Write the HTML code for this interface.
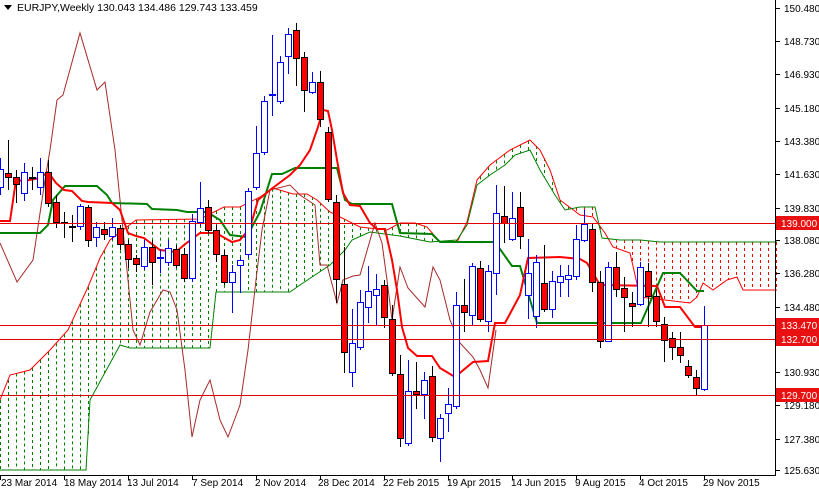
<!DOCTYPE html>
<html><head><meta charset="utf-8"><style>
html,body{margin:0;padding:0;background:#fff;width:819px;height:491px;overflow:hidden}
svg{display:block;font-family:"Liberation Sans",sans-serif;font-size:10px}
</style></head><body>
<svg id="c" width="819" height="491" viewBox="0 0 819 491" xmlns="http://www.w3.org/2000/svg">
<rect width="819" height="491" fill="#fff"/>
<g id="hatch"></g>
<g id="lines"></g>
<g id="candles"></g>
<g stroke="#e00000" stroke-width="1">
<line x1="0" y1="223.5" x2="776" y2="223.5"/>
<line x1="0" y1="325.5" x2="776" y2="325.5"/>
<line x1="0" y1="339.5" x2="776" y2="339.5"/>
<line x1="0" y1="395.5" x2="776" y2="395.5"/>
</g>
<line x1="775.5" y1="0" x2="775.5" y2="476" stroke="#000"/>
<line x1="0" y1="475.5" x2="776" y2="475.5" stroke="#000"/>
<g fill="#000">
<text x="784" y="12">150.480</text>
<text x="784" y="45">148.730</text>
<text x="784" y="78">146.930</text>
<text x="784" y="112">145.180</text>
<text x="784" y="145">143.380</text>
<text x="784" y="178">141.630</text>
<text x="784" y="212">139.830</text>
<text x="784" y="244">138.080</text>
<text x="784" y="277">136.280</text>
<text x="784" y="311">134.480</text>
<text x="784" y="376">130.930</text>
<text x="784" y="409">129.180</text>
<text x="784" y="443">127.380</text>
<text x="784" y="474">125.630</text>
</g>
<g stroke="#000">
<line x1="776" y1="8.5" x2="780" y2="8.5"/><line x1="776" y1="41.5" x2="780" y2="41.5"/><line x1="776" y1="74.5" x2="780" y2="74.5"/><line x1="776" y1="108.5" x2="780" y2="108.5"/><line x1="776" y1="141.5" x2="780" y2="141.5"/><line x1="776" y1="174.5" x2="780" y2="174.5"/><line x1="776" y1="208.5" x2="780" y2="208.5"/><line x1="776" y1="240.5" x2="780" y2="240.5"/><line x1="776" y1="273.5" x2="780" y2="273.5"/><line x1="776" y1="307.5" x2="780" y2="307.5"/><line x1="776" y1="372.5" x2="780" y2="372.5"/><line x1="776" y1="405.5" x2="780" y2="405.5"/><line x1="776" y1="439.5" x2="780" y2="439.5"/><line x1="776" y1="470.5" x2="780" y2="470.5"/>
</g>
<g>
<rect x="776" y="216" width="43" height="14" fill="#e81010"/><text x="781" y="227" fill="#fff">139.000</text>
<rect x="776" y="318" width="43" height="14" fill="#e81010"/><text x="781" y="329" fill="#fff">133.470</text>
<rect x="776" y="332" width="43" height="14" fill="#e81010"/><text x="781" y="343" fill="#fff">132.700</text>
<rect x="776" y="388" width="43" height="14" fill="#e81010"/><text x="781" y="399" fill="#fff">129.700</text>
</g>
<g fill="#000">
<text x="1" y="486">23 Mar 2014</text>
<text x="64" y="486">18 May 2014</text>
<text x="127" y="486">13 Jul 2014</text>
<text x="192" y="486">7 Sep 2014</text>
<text x="255" y="486">2 Nov 2014</text>
<text x="318" y="486">28 Dec 2014</text>
<text x="383" y="486">22 Feb 2015</text>
<text x="447" y="486">19 Apr 2015</text>
<text x="511" y="486">14 Jun 2015</text>
<text x="575" y="486">9 Aug 2015</text>
<text x="639" y="486">4 Oct 2015</text>
<text x="703" y="486">29 Nov 2015</text>
</g>
<g stroke="#000"><line x1="0.5" y1="476" x2="0.5" y2="480"/><line x1="64.5" y1="476" x2="64.5" y2="480"/><line x1="128.5" y1="476" x2="128.5" y2="480"/><line x1="192.5" y1="476" x2="192.5" y2="480"/><line x1="256.5" y1="476" x2="256.5" y2="480"/><line x1="320.5" y1="476" x2="320.5" y2="480"/><line x1="384.5" y1="476" x2="384.5" y2="480"/><line x1="448.5" y1="476" x2="448.5" y2="480"/><line x1="512.5" y1="476" x2="512.5" y2="480"/><line x1="576.5" y1="476" x2="576.5" y2="480"/><line x1="640.5" y1="476" x2="640.5" y2="480"/><line x1="704.5" y1="476" x2="704.5" y2="480"/></g>
<polygon points="4,5 12,5 8,10" fill="#000"/>
<text x="17" y="11" fill="#000" font-size="10.5">EURJPY,Weekly  130.043 134.486 129.743 133.459</text>
</svg>
<script>
var NS="http://www.w3.org/2000/svg";
function el(p,t,a){var e=document.createElementNS(NS,t);for(var k in a)e.setAttribute(k,a[k]);p.appendChild(e);return e;}
function interp(pts,x){for(var i=0;i<pts.length-1;i++){if(x>=pts[i][0]&&x<=pts[i+1][0]){var t=(x-pts[i][0])/((pts[i+1][0]-pts[i][0])||1);return pts[i][1]+t*(pts[i+1][1]-pts[i][1]);}}return pts[pts.length-1][1];}
var A=[[0,400],[10,375],[30,370],[50,350],[68,330],[88,287],[100,258],[110,240],[136,220],[200,219],[224,207],[240,207],[260,197],[273,188],[293,194],[307,194],[317,200],[330,212],[360,227],[387,230],[400,223],[415,223],[427,227],[440,242],[457,242],[467,222],[477,180],[490,165],[510,150],[530,140],[540,150],[550,170],[560,200],[580,215],[593,217],[605,233],[613,247],[630,253],[640,297],[690,303],[697,297],[703,283],[713,290],[727,280],[737,277],[743,290],[777,290]];
var B=[[0,470],[86,470],[90,400],[120,345],[130,348],[210,348],[216,292],[290,292],[300,285],[330,265],[345,250],[352,240],[370,232],[400,236],[430,242],[457,240],[467,225],[477,185],[490,175],[505,165],[515,155],[530,150],[540,170],[555,195],[565,210],[580,207],[595,207],[602,238],[620,240],[640,240],[660,242],[777,242]];
var h=document.getElementById("hatch"),L=document.getElementById("lines");
for(var x=0;x<=776;x+=8){var a=interp(A,x),b=interp(B,x);var g=a<b;el(h,"line",{x1:x+.5,y1:Math.min(a,b),x2:x+.5,y2:Math.max(a,b),stroke:g?"#008000":"#ff0000","stroke-dasharray":"3,3","stroke-width":1});}
function pl(pts,c,w){el(L,"polyline",{points:pts.map(function(p){return p.join(",")}).join(" "),fill:"none",stroke:c,"stroke-width":w});}
pl(A,"#ff0000",1);pl(B,"#008000",1);
pl([[0,243],[17,282],[33,260],[45,180],[50,150],[57,100],[63,95],[80,33],[97,90],[105,82],[115,150],[125,250],[133,330],[140,345],[150,312],[163,290],[170,292],[177,310],[185,370],[192,437],[200,400],[210,380],[220,420],[228,437],[240,405],[248,350],[256,280],[262,230],[270,190],[290,185],[300,195],[315,205],[320,265],[327,265],[337,303],[343,280],[353,276],[360,275],[375,223],[382,243],[387,280],[392,320],[400,267],[408,288],[425,307],[433,267],[440,280],[450,320],[460,343],[473,357],[480,370],[488,388],[496,330]],"#a52a2a",1);
pl([[0,233],[40,233],[48,225],[53,200],[65,186],[97,186],[107,195],[112,203],[147,204],[152,209],[177,210],[187,212],[207,212],[220,220],[230,235],[247,237],[253,225],[260,212],[272,174],[282,174],[295,168],[337,168],[345,200],[352,204],[392,204],[400,233],[432,234],[440,242],[495,242],[512,266],[520,266],[537,323],[641,323],[663,273],[680,273],[697,291],[704,291]],"#008000",2);
pl([[0,221],[10,221],[16,180],[24,181],[40,178],[48,172],[56,183],[64,190],[72,191],[82,201],[88,202],[112,203],[120,210],[128,233],[136,236],[144,238],[160,250],[176,252],[184,245],[200,233],[216,233],[232,242],[240,240],[250,228],[258,200],[270,190],[290,175],[300,165],[310,150],[318,127],[323,110],[328,111],[332,130],[337,160],[343,193],[350,205],[360,206],[370,223],[377,229],[385,229],[392,260],[397,290],[402,327],[408,348],[417,356],[432,356],[440,368],[455,377],[473,362],[488,361],[495,323],[505,323],[520,295],[528,258],[560,257],[580,259],[587,263],[600,285],[657,286],[665,307],[680,307],[695,327],[704,327]],"#ff0000",2);
var D=[[0,187,169,158,195],[8,173,177,140,190],[16,177,184,170,203],[24,193,172,163,201],[32,177,178,167,190],[40,187,172,158,195],[48,172,203,160,207],[56,202,222,195,228],[64,222,223,212,238],[72,226,227,215,242],[80,226,206,204,230],[88,207,240,205,247],[96,237,227,222,247],[104,229,234,222,240],[112,236,227,218,240],[120,228,244,225,250],[128,244,259,240,268],[136,258,264,255,272],[144,266,247,240,270],[152,247,262,240,285],[160,258,257,249,273],[168,262,248,240,266],[176,249,265,245,268],[184,254,278,248,282],[192,278,221,214,282],[200,222,208,182,226],[208,207,230,200,234],[216,230,254,225,262],[224,255,282,250,285],[232,282,272,265,313],[240,265,260,257,293],[248,254,191,188,258],[256,187,153,126,190],[264,152,101,96,155],[272,95,94,35,116],[280,101,62,56,104],[288,56,34,28,74],[296,30,58,23,86],[304,57,90,52,112],[312,92,82,72,94],[320,82,119,71,127],[328,132,199,127,202],[336,202,279,195,303],[344,284,352,247,373],[352,372,343,309,387],[360,347,302,290,350],[368,307,291,266,323],[376,295,289,274,326],[384,285,317,280,328],[392,319,373,305,376],[400,374,438,355,447],[408,443,391,360,446],[416,391,394,362,409],[424,394,380,372,419],[432,376,437,366,442],[440,438,418,414,462],[448,413,404,388,432],[456,406,305,292,409],[464,305,312,279,332],[472,315,266,263,325],[480,268,319,261,322],[488,321,271,265,332],[496,273,213,185,295],[504,216,223,186,243],[512,239,218,192,241],[520,207,236,192,249],[528,295,273,239,319],[536,316,262,255,328],[544,283,309,245,312],[552,309,281,271,318],[560,282,276,265,297],[568,279,275,265,297],[576,276,239,225,280],[584,240,224,210,242],[592,229,282,224,292],[600,282,341,271,348],[608,341,267,262,341],[616,267,289,252,297],[624,288,297,277,332],[632,303,306,292,327],[640,304,267,262,306],[648,271,296,263,327],[656,296,321,290,327],[664,324,340,317,362],[672,338,347,332,360],[680,347,355,332,363],[688,366,375,360,378],[696,377,388,370,396],[704,389,325,306,391]];
var C=document.getElementById("candles");
D.forEach(function(d){var x=d[0],o=d[1],c=d[2],hi=d[3],lo=d[4];var bull=c<o;var col=bull?"#0000ff":"#000";
el(C,"line",{x1:x+.5,y1:hi,x2:x+.5,y2:lo,stroke:col,"stroke-width":1});
var t=Math.min(o,c),bt=Math.max(o,c);if(bt-t<1)bt=t+1;
el(C,"rect",{x:x-2.5,y:t+.5,width:6,height:bt-t,fill:bull?"#fff":"#ff0000",stroke:col,"stroke-width":1});});
</script>
</body></html>
